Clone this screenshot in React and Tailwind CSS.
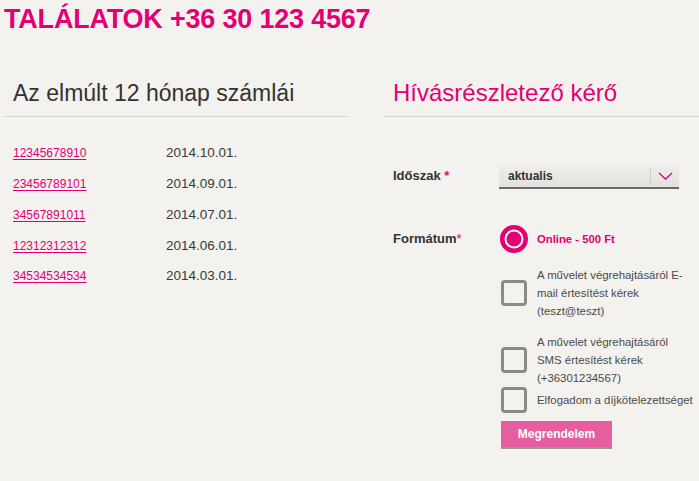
import React from "react";

const szamlak = [
  { id: "12345678910", datum: "2014.10.01." },
  { id: "23456789101", datum: "2014.09.01." },
  { id: "34567891011", datum: "2014.07.01." },
  { id: "12312312312", datum: "2014.06.01." },
  { id: "34534534534", datum: "2014.03.01." },
];

function Checkbox() {
  return (
    <span className="block w-[26px] h-[26px] shrink-0 rounded-[4px] border-[3px] border-[#8c8b88]" />
  );
}

export default function App() {
  return (
    <div className="min-h-screen w-full bg-[#f3f2ee] font-['Liberation_Sans',Arial,sans-serif] overflow-hidden">
      <h1 className="pl-[4px] pt-[4px] text-[27px] leading-[30px] font-bold tracking-[-0.2px] text-[#e20074]">
        TALÁLATOK +36 30 123 4567
      </h1>

      <div className="flex mt-[44px]">
        {/* Számlák */}
        <div className="ml-[4px] w-[344px] shrink-0">
          <h2 className="pl-[9px] pb-[8px] text-[23px] leading-[30px] text-[#333333] border-b border-[#d3d2ce]">
            Az elmúlt 12 hónap számlái
          </h2>
          <div className="mt-[21px] pl-[9px]">
            {szamlak.map((sz) => (
              <div key={sz.id} className="flex items-center h-[30.75px]">
                <a
                  href="#"
                  className="w-[153px] text-[12px] text-[#e20074] underline underline-offset-2"
                >
                  {sz.id}
                </a>
                <span className="text-[13.5px] text-[#3a3a3a]">{sz.datum}</span>
              </div>
            ))}
          </div>
        </div>

        {/* Hívásrészletező */}
        <div className="ml-[36px] flex-1">
          <h2 className="pl-[9px] pb-[8px] text-[24px] leading-[30px] text-[#e20074] border-b border-[#d3d2ce]">
            Hívásrészletező kérő
          </h2>

          <div className="pl-[9px] mt-[48px] flex items-center">
            <label className="w-[106px] text-[13px] font-bold text-[#333333] -mt-[2px]">
              Időszak <span className="text-[#e20074]">*</span>
            </label>
            <div className="flex items-center w-[180px] h-[24px] bg-gradient-to-b from-[#efeeea] to-[#e2e1dd] border-b-2 border-[#6b6b6b]">
              <span className="flex-1 pl-[9px] text-[12px] font-bold text-[#333333]">
                aktualis
              </span>
              <span className="w-px h-[17px] bg-[#cfcecb]" />
              <span className="w-[28px] flex justify-center">
                <svg width="15" height="8" viewBox="0 0 15 8" fill="none">
                  <path d="M1 1l6.5 6L14 1" stroke="#e20074" strokeWidth="1.3" />
                </svg>
              </span>
            </div>
          </div>

          <div className="pl-[9px] mt-[36px] flex items-center">
            <label className="w-[107px] text-[13px] font-bold text-[#333333]">
              Formátum<span className="text-[#e20074] font-normal">*</span>
            </label>
            <svg width="28" height="28" viewBox="0 0 28 28" className="shrink-0">
              <circle cx="14" cy="14" r="14" fill="#e20074" />
              <circle cx="14" cy="14" r="8.5" fill="none" stroke="#ffffff" strokeWidth="2" />
            </svg>
            <span className="ml-[9px] text-[11.3px] font-bold text-[#e20074]">
              Online - 500 Ft
            </span>
          </div>

          <div className="pl-[117px] text-[11.4px] leading-[18px] text-[#4a4a4a]">
            <div className="mt-[13px] flex items-center gap-[10px]">
              <Checkbox />
              <p className="whitespace-nowrap">
                A művelet végrehajtásáról E-
                <br />
                mail értesítést kérek
                <br />
                (teszt@teszt)
              </p>
            </div>
            <div className="mt-[13px] flex items-center gap-[10px]">
              <Checkbox />
              <p className="whitespace-nowrap">
                A művelet végrehajtásáról
                <br />
                SMS értesítést kérek
                <br />
                (+36301234567)
              </p>
            </div>
            <div className="flex items-center gap-[10px]">
              <Checkbox />
              <p className="whitespace-nowrap">Elfogadom a díjkötelezettséget</p>
            </div>
            <button className="mt-[8px] w-[111px] h-[26px] bg-[#e65ea1] text-white text-[12px] font-bold shadow-[0_2px_0_#9b9a97]">
              Megrendelem
            </button>
          </div>
        </div>
      </div>
    </div>
  );
}
